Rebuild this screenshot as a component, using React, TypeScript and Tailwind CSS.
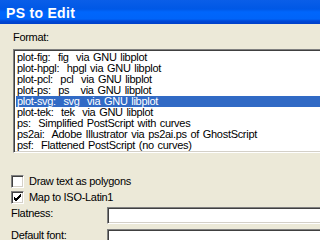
import React from "react";

// 出力形式の一覧
const formats = [
  "plot-fig:  fig  via GNU libplot",
  "plot-hpgl:  hpgl via GNU libplot",
  "plot-pcl:  pcl  via GNU libplot",
  "plot-ps:  ps   via GNU libplot",
  "plot-svg:  svg  via GNU libplot",
  "plot-tek:  tek  via GNU libplot",
  "ps:  Simplified PostScript with curves",
  "ps2ai:  Adobe Illustrator via ps2ai.ps of GhostScript",
  "psf:  Flattened PostScript (no curves)",
];

const sunken =
  "border border-[#808080] border-b-white border-r-white shadow-[inset_1px_1px_0_#404040,inset_-1px_-1px_0_#d4d0c8]";

function Checkbox({ checked, label }: { checked: boolean; label: string }) {
  return (
    <div className="flex items-center h-[13px] gap-[5px]">
      <div className={`w-[13px] h-[13px] bg-white flex items-center justify-center ${sunken}`}>
        {checked && (
          <svg width="9" height="9" viewBox="0 0 9 9">
            <path d="M1 4 L3 6 L8 1 M1 5 L3 7 L8 2 M1 6 L3 8 L8 3" stroke="#000" strokeWidth="1" fill="none" />
          </svg>
        )}
      </div>
      <span>{label}</span>
    </div>
  );
}

export default function App() {
  const selected = 4;
  return (
    <div
      className="w-[320px] h-[240px] overflow-hidden flex flex-col bg-[#0055e5] text-[11px] text-black tracking-[-0.3px]"
      style={{ fontFamily: '"Liberation Sans", "Noto Sans CJK JP", sans-serif' }}
    >
      {/* タイトルバー */}
      <div className="h-[24px] shrink-0 bg-[linear-gradient(to_bottom,#0a5ee8_0px,#0058e6_9px,#0066fc_12px,#0064f8_19px,#0048d8_21px,#0040c8_24px)] flex items-center pl-[6px]">
        <span className="text-white font-bold text-[14px] tracking-[0.3px] leading-none mt-[1px]">PS to Edit</span>
      </div>

      <div className="flex-1 flex">
        <div className="w-[4px] bg-[linear-gradient(to_right,#0831d9,#0055e5_2px,#166aee_3px)]" />
        <div className="flex-1 bg-[#ece9d8] flex flex-col">
          <div className="pl-[13px] pt-[8px] h-[25px] leading-[11px]">Format:</div>

          <div className={`ml-[13px] w-[320px] h-[104px] bg-white py-[2px] pl-[2px] ${sunken}`}>
            {formats.map((f, i) => (
              <div
                key={f}
                className={`h-[11px] leading-[11px] whitespace-pre pl-[1px] [word-spacing:1px] ${
                  i === selected ? "bg-[#316ac5] text-white" : ""
                }`}
              >
                {f}
              </div>
            ))}
          </div>

          <div className="pl-[11px] pt-[22px] flex flex-col gap-[3px]">
            <Checkbox checked={false} label="Draw text as polygons" />
            <Checkbox checked={true} label="Map to ISO-Latin1" />
          </div>

          <div className="flex items-start mt-[3px] h-[17px]">
            <span className="pl-[11px] w-[107px] pt-[1px] leading-[11px]">Flatness:</span>
            <div className={`flex-1 h-[17px] bg-white ${sunken}`} />
          </div>
          <div className="flex items-start mt-[5px] h-[17px]">
            <span className="pl-[11px] w-[107px] pt-[1px] leading-[11px]">Default font:</span>
            <div className={`flex-1 h-[17px] bg-white ${sunken}`} />
          </div>
        </div>
      </div>
    </div>
  );
}
